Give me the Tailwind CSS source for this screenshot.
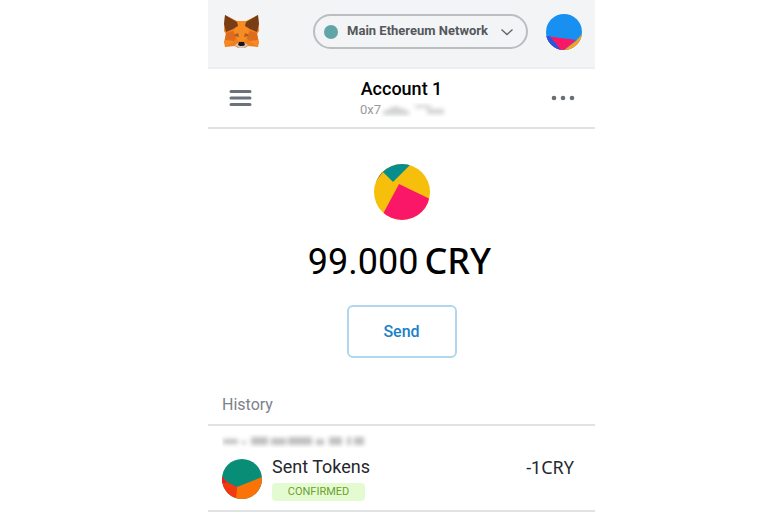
<!DOCTYPE html>
<html lang="en">
<head>
<meta charset="utf-8">
<meta name="viewport" content="width=device-width, initial-scale=1">
<title>Wallet</title>
<script src="https://cdn.jsdelivr.net/npm/@tailwindcss/browser@4"></script>
</head>
<body class="bg-white pl-7 font-['Roboto',sans-serif] text-black">
<main class="mx-auto w-full max-w-[387px]">
  <header class="flex h-[69px] items-center border-b-2 border-[#eceeef] bg-[#f2f4f6] pr-[13px] pl-[15px] pb-1">
    <svg class="h-9 w-[37px]" viewBox="0 0 37 36" role="img" aria-label="Fox logo">
      <path fill="#ee8022" d="M2 1 14 7H23L35 1 36 17 34 20 36 28 35 33 25 32 22 34H15L12 32 2 33 1 28 3 20 1 17Z"/>
      <path fill="#f78d22" d="M11 16 14 7H23L26 16 22 27H15ZM2 26H12L3 32ZM25 26H35L34 32Z"/>
      <path fill="#763d16" d="M2 1 14 8 15 12 10 15 3 18 1 10ZM35 1 23 8 22 12 27 15 34 18 36 10Z"/>
      <path fill="#df6c1c" d="M3 19 10 17 13 24 11 27 2 26ZM34 19 27 17 24 24 26 27 35 26Z"/>
      <path fill="#a85a28" d="M11 21 15 19 16 23 12 22ZM26 21 22 19 21 23 25 22Z"/>
      <path fill="#d5c3b8" d="M12 31 15 29H22L25 31 21 34H16Z"/>
      <path fill="#161616" d="M16 28H21L22 31 20 32H17L15 31Z"/>
    </svg>
    <button type="button" class="ml-auto flex h-[35px] items-center rounded-full border-2 border-[#bbbec1] pr-3 pl-[9px] text-[13px] leading-4 font-bold text-[#55585b]">
      <span class="mr-[9px] h-[14px] w-[14px] rounded-full bg-[#61a5a9]"></span>
      <span class="pb-0.5">Main Ethereum Network</span>
      <svg class="ml-3 h-3 w-[14px]" viewBox="0 0 14 12" fill="none" stroke="#606366" stroke-width="1.3" aria-hidden="true"><path d="m1.500 3.500 5.500 5 5.500-5"/></svg>
    </button>
    <button type="button" aria-label="My accounts" class="ml-[18px] h-9 w-9 overflow-hidden rounded-full">
      <svg viewBox="0 0 36 36" aria-hidden="true"><path fill="#1890f2" d="M0 0H36V36H0Z"/><path fill="#f8a31b" d="M36 20 30 27 18 36H36Z"/><path fill="#fa1766" d="M0 22 30 26 18 36H0Z"/><path fill="#2357df" d="M0 22 4 22.500 15 36H0Z"/></svg>
    </button>
  </header>

  <section class="flex h-[60px] items-center justify-between border-b-2 border-[#e0e3e5] px-5" aria-label="Account">
    <button type="button" aria-label="Menu" class="w-6">
      <svg viewBox="0 0 24 20" stroke="#6a737d" stroke-width="3" stroke-linecap="round" aria-hidden="true"><path d="M3 3.500H22M3 10H22M3 16.500H22"/></svg>
    </button>
    <div class="flex flex-col items-center">
      <h1 class="text-lg leading-6 font-medium">Account 1</h1>
      <p class="flex items-center pl-1 text-[13px] leading-[18px] text-[#989b9e]">0x7<svg class="h-[14px] w-[66px]" viewBox="0 0 66 14" aria-hidden="true"><g fill="#d0d2d3" class="blur-[2px]"><path d="M1 9 14 3 28 8V12H3Z"/><path d="M34 2H50V5H34ZM46 6H63V11H46Z"/></g></svg></p>
    </div>
    <button type="button" aria-label="Account options" class="w-6">
      <svg viewBox="0 0 24 20" fill="#6a6f74" aria-hidden="true"><circle cx="3" cy="10" r="2.300"/><circle cx="12" cy="10" r="2.300"/><circle cx="21" cy="10" r="2.300"/></svg>
    </button>
  </section>

  <section class="flex flex-col items-center pt-[35px]" aria-label="Balance">
    <svg class="h-14 w-14 rounded-full" viewBox="0 0 56 56" aria-hidden="true"><path fill="#f6bf0b" d="M0 0H56V56H0Z"/><path fill="#078d8d" d="M9 8 19 18 36 1V0H9Z"/><path fill="#446477" d="M2 17 9 8 7 7 0 17Z"/><path fill="#fa1768" d="M25 20 56 35V56H5L10 48Z"/></svg>
    <p class="mt-4 flex items-baseline gap-1.5 pr-1 text-4xl leading-[50px]"><span>99.000</span><span class="font-['Noto_Sans',sans-serif] font-medium">CRY</span></p>
    <button type="button" class="mt-[18px] h-[53px] w-[110px] rounded-md border-2 border-[#b1d7ee] text-base font-medium text-[#2081c4]">Send</button>
  </section>

  <section class="pt-9">
    <h2 class="border-b-2 border-[#e0e3e5] px-[14px] pb-2 text-base leading-[22px] text-[#7b828a]">History</h2>
    <article class="border-b-2 border-[#e0e3e5] px-[14px] pt-2 pb-[9px]">
      <svg class="mb-[7px] block h-[14px] w-[146px]" viewBox="0 0 146 14" aria-hidden="true"><g fill="#c0c0c0" class="blur-[2px]"><path d="M1 5H16V10H1ZM20 7H24V10H20ZM29 3H46V11H29ZM49 4H64V11H49ZM66 3H90V11H66ZM94 5H102V11H94ZM107 3H120V11H107ZM125 3H129V11H125ZM132 3H142V11H132Z"/></g></svg>
      <div class="flex items-start">
        <svg class="mt-1 h-10 w-10 rounded-full" viewBox="0 0 40 40" aria-hidden="true"><path fill="#088e77" d="M0 0H40V40H0Z"/><path fill="#fb7306" d="M15 28 40 18V40H13Z"/><path fill="#f43810" d="M0 18 5 23 15 28 14 40H0Z"/><path fill="#ef1b20" d="M0 17 5 24H0Z"/></svg>
        <div class="ml-[10px]">
          <h3 class="text-lg leading-6 text-[#25282b]">Sent Tokens</h3>
          <p class="mt-1 w-[93px] rounded bg-[#e4fbd2] text-center text-[11px] leading-[18px] text-[#6c9f2c]">CONFIRMED</p>
        </div>
        <p class="mr-[7px] ml-auto text-lg leading-6 text-[#25282b]">-1<span class="font-['Noto_Sans',sans-serif]">CRY</span></p>
      </div>
    </article>
  </section>
</main>
</body>
</html>
